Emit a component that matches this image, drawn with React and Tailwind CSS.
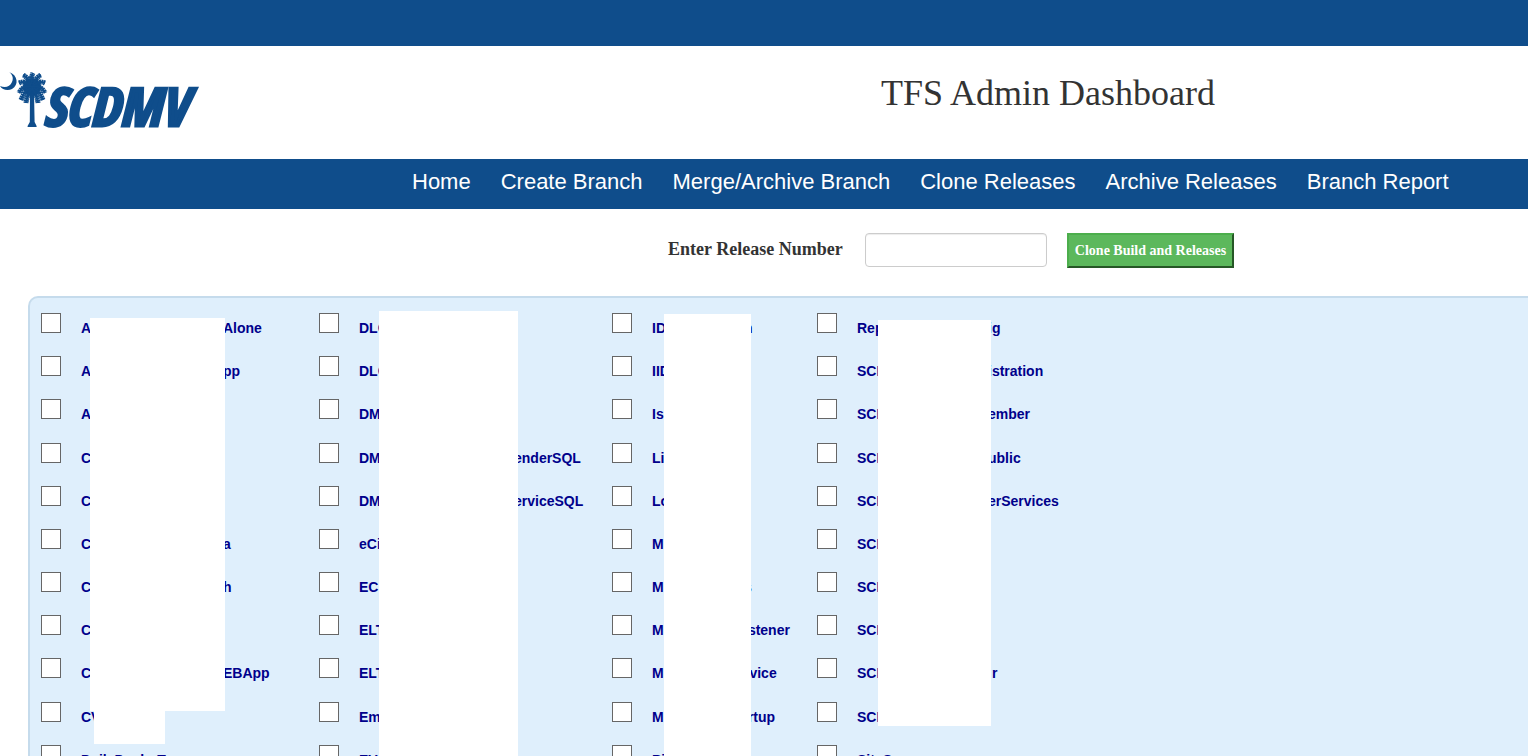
const NAV = ["Home", "Create Branch", "Merge/Archive Branch", "Clone Releases", "Archive Releases", "Branch Report"];

const COLUMNS = [
  {
    col: "w-[278px]",
    head: "w-[142px]",
    rows: [["A", "Alone"], ["A", "pp"], ["A", ""], ["C", ""], ["C", ""], ["C", "a"], ["C", "h"], ["C", ""], ["C", "EBApp"], ["CV", ""], ["DailyDealerT", ""]],
    masks: ["left-[49px] top-[8px] h-[393px] w-[135px]", "left-[53px] top-[401px] h-[33px] w-[71px]"],
  },
  {
    col: "w-[293px]",
    head: "w-[155px]",
    rows: [["DLC", ""], ["DLC", ""], ["DM", ""], ["DM", "enderSQL"], ["DM", "erviceSQL"], ["eCi", ""], ["EC", ""], ["ELT", ""], ["ELT", ""], ["Em", ""], ["EV", ""]],
    masks: ["left-[60px] top-[1px] h-[475px] w-[139px]"],
  },
  {
    col: "w-[205px]",
    head: "w-[92px]",
    rows: [["ID", "n"], ["IID", ""], ["Is", ""], ["Li", ""], ["Lo", ""], ["M", ""], ["M", "s"], ["M", "istener"], ["M", "rvice"], ["M", " rtup"], ["Pi", ""]],
    masks: ["left-[52px] top-[4px] h-[472px] w-[87px]"],
  },
  {
    col: "flex-1",
    head: "w-[131px]",
    rows: [["Rep", "ig"], ["SCD", "istration"], ["SCD", "ember"], ["SCD", "ublic"], ["SCD", "erServices"], ["SCD", ""], ["SCD", ""], ["SCD", ""], ["SCD", " r"], ["SCD", ""], ["SiteS", ""]],
    masks: ["left-[61px] top-[10px] h-[406px] w-[113px]"],
  },
];

const FRONDS = [
  "M32 17 C31 11 31 7 33 3",
  "M32 17 C29 10 27 7 23 5",
  "M32 17 C35 10 37 7 41 5",
  "M32 17 C27 12 24 11 19 13",
  "M32 17 C37 12 40 11 45 13",
  "M32 17 C27 15 22 17 19 23",
  "M32 17 C37 15 42 17 45 23",
  "M32 18 C28 18 24 22 21 30",
  "M32 18 C36 18 40 22 43 30",
  "M32 18 C30 21 27 25 26 33",
  "M32 18 C34 21 37 25 38 33",
];

function Logo() {
  return (
    <svg className="shrink-0" width="200" height="60" viewBox="0 0 200 60" fill="#0f4d8b" role="img" aria-label="SCDMV">
      <path d="M9 2C18 5 19 15 12 19C8 21 2 20 0 16C5 18 10 17 12 12C14 8 12 4 9 2Z" />
      <path d="M30 22h4l.6 30 2 4v1h-9v-1l2.200-4z" />
      <ellipse cx="32" cy="17" rx="9" ry="9" />
      <g fill="none" stroke="#0f4d8b" strokeWidth="5" strokeDasharray="1.800 .4">
        {FRONDS.map((d) => <path key={d} d={d} />)}
      </g>
      <g fill="none" stroke="#0f4d8b" strokeWidth="2">
        {FRONDS.map((d) => <path key={d} d={d} />)}
      </g>
      <text
        x="43"
        y="56"
        fontFamily="'Open Sans Condensed', 'Roboto Condensed', 'Liberation Sans Narrow', 'Liberation Sans', sans-serif"
        fontSize="53"
        fontWeight="bold"
        fontStyle="italic"
        stroke="#0f4d8b"
        strokeWidth="3"
      >
        SCDMV
      </text>
    </svg>
  );
}

function ReleaseRow({ id, head, tail, headClass }) {
  return (
    <li className="flex items-start">
      <input
        id={id}
        type="checkbox"
        className="mt-[3px] size-5 shrink-0 appearance-none border border-[#666] bg-white checked:bg-[#0f4d8b]"
      />
      <label htmlFor={id} className="ml-5 flex pt-2 text-[14px] leading-5 font-bold whitespace-pre text-[#00008b]">
        <span className={headClass}>{head}</span>
        <span>{tail}</span>
      </label>
    </li>
  );
}

export default function App() {
  return (
    <div className="h-screen overflow-hidden bg-white font-['Liberation_Sans',Arial,sans-serif]">
      <div className="h-[46px] bg-[#0f4d8b]" />
      <header className="flex h-[113px] items-start pt-6">
        <Logo />
        <h1 className="ml-[681px] whitespace-nowrap font-['Liberation_Serif',serif] text-[36px] leading-[46px] text-[#333]">
          TFS Admin Dashboard
        </h1>
      </header>
      <nav className="flex h-[50px] gap-[30px] bg-[#0f4d8b] pt-2 pl-[412px] text-[22px] leading-[30px] text-white">
        {NAV.map((n) => (
          <a key={n} href="#" className="whitespace-nowrap">{n}</a>
        ))}
      </nav>
      <form className="flex items-start pt-6 pl-[668px] font-['Liberation_Serif',serif] font-bold" onSubmit={(e) => e.preventDefault()}>
        <label htmlFor="release" className="w-[197px] pt-1 text-[18px] leading-6 text-[#333]">Enter Release Number</label>
        <input id="release" type="text" className="h-[34px] w-[182px] rounded border border-[#ccc] px-3 text-sm shadow-[inset_0_1px_1px_rgba(0,0,0,0.075)]" />
        <button type="submit" className="ml-5 h-[35px] w-[167px] border-2 border-t-[#4cae4c] border-r-[#265726] border-b-[#265726] border-l-[#4cae4c] bg-[#5cb85c] text-[14px] leading-5 whitespace-nowrap text-white">
          Clone Build and Releases
        </button>
      </form>
      <main className="mt-7 ml-7 flex rounded-tl-[10px] border-2 border-r-0 border-[#c5dbec] bg-[#dfeffc] pt-3 pl-[11px]">
        {COLUMNS.map((c, i) => (
          <div key={i} className={`relative ${c.col}`}>
            <ul className="grid h-[475px] grid-rows-11">
              {c.rows.map(([head, tail], r) => (
                <ReleaseRow key={r} id={`release-${i}-${r}`} head={head} tail={tail} headClass={c.head} />
              ))}
            </ul>
            {c.masks.map((m) => (
              <div key={m} className={`absolute bg-white ${m}`} />
            ))}
          </div>
        ))}
      </main>
    </div>
  );
}
